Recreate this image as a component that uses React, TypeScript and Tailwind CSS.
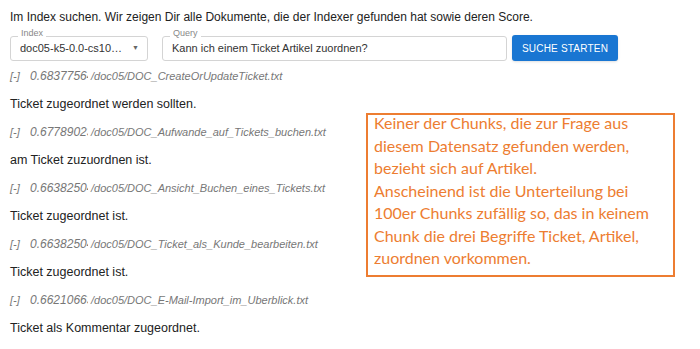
const results = [
  { score: "0.68377564", path: "/doc05/DOC_CreateOrUpdateTicket.txt", text: "Ticket zugeordnet werden sollten." },
  { score: "0.67789023", path: "/doc05/DOC_Aufwande_auf_Tickets_buchen.txt", text: "am Ticket zuzuordnen ist." },
  { score: "0.66382504", path: "/doc05/DOC_Ansicht_Buchen_eines_Tickets.txt", text: "Ticket zugeordnet ist." },
  { score: "0.66382504", path: "/doc05/DOC_Ticket_als_Kunde_bearbeiten.txt", text: "Ticket zugeordnet ist." },
  { score: "0.66210663", path: "/doc05/DOC_E-Mail-Import_im_Uberblick.txt", text: "Ticket als Kommentar zugeordnet." },
];

const App = () => {
  return (
    <div className="relative w-[700px] h-[349px] overflow-hidden bg-white font-['Liberation_Sans',Arial,sans-serif] text-[#222]">
      <div className="px-[10px] pt-[10px]">
        <p className="text-[12px] leading-[14px]">
          Im Index suchen. Wir zeigen Dir alle Dokumente, die der Indexer gefunden hat sowie deren Score.
        </p>
        <div className="flex items-end gap-[5px] mt-[11px]">
          <div className="relative w-[138px] h-[25px] rounded-[3px] border border-[#d4d4d4] flex items-center pl-[9px] pr-[8px]">
            <span className="absolute -top-[10px] left-[7px] bg-white px-[3px] text-[9px] leading-[12px] text-[#888]">
              Index
            </span>
            <span className="w-[106px] truncate text-[11px] text-[#333]">doc05-k5-0.0-cs100-o10</span>
            <span className="ml-auto text-[7px] text-[#666]">▼</span>
          </div>
          <div className="relative ml-[9px] w-[345px] h-[25px] rounded-[3px] border border-[#d4d4d4] flex items-center pl-[9px]">
            <span className="absolute -top-[10px] left-[7px] bg-white px-[3px] text-[9px] leading-[12px] text-[#888]">
              Query
            </span>
            <span className="text-[11px] text-[#333]">Kann ich einem Ticket Artikel zuordnen?</span>
          </div>
          <button className="w-[106px] h-[26px] rounded-[3px] bg-[#1976d2] text-white text-[10px] font-medium tracking-[0.2px] shadow-sm">
            SUCHE STARTEN
          </button>
        </div>
      </div>
      <div className="flex flex-col px-[10px] pt-[1px]">
        {results.map((r, i) => (
          <div key={i} className="flex flex-col">
            <div className="h-[28px] flex items-center italic text-[11px] text-[#777] whitespace-nowrap">
              <span className="w-[20px] shrink-0">[-]</span>
              <span className="w-[58px] shrink-0 overflow-hidden text-[12px]">{r.score}</span>
              <span className="ml-[3px]">{r.path}</span>
            </div>
            <div className="h-[28px] flex items-center text-[12.5px] text-[#222]">{r.text}</div>
          </div>
        ))}
      </div>
      <div className="absolute left-[366px] top-[113px] w-[309px] h-[164px] border-[2px] border-[#ED7D31] px-[6px] font-['Lato',sans-serif] text-[16px] leading-[22.5px] text-[#ED7D31]">
        <div className="-mt-[3px]">
          Keiner der Chunks, die zur Frage aus diesem Datensatz gefunden werden, bezieht sich auf Artikel.
          <br />
          Anscheinend ist die Unterteilung bei 100er Chunks zufällig so, das in keinem Chunk die drei Begriffe Ticket, Artikel, zuordnen vorkommen.
        </div>
      </div>
    </div>
  );
};

export default App;
